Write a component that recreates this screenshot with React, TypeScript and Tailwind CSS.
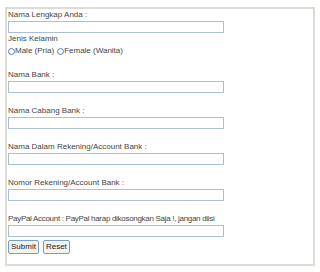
import { useState } from "react";

const fields = [
  "Nama Bank :",
  "Nama Cabang Bank :",
  "Nama Dalam Rekening/Account Bank :",
  "Nomor Rekening/Account Bank :",
];

const inputCls =
  "block w-[216px] h-[12px] border border-[#a9bfd6] bg-white outline-none";

const App = () => {
  const [gender, setGender] = useState("");

  return (
    <div className="w-[320px] h-[272px] bg-white pt-[7px] pl-[5px] font-['Liberation_Sans',Arial,sans-serif] text-[8px] leading-[12px] text-[#444]">
      <form className="w-[310px] h-[259px] border-2 border-[#dcdcd4] px-[1px] pt-0">
        {/* nama lengkap */}
        <div>Nama Lengkap Anda :</div>
        <input className={inputCls} />

        <div>Jenis Kelamin</div>
        <div className="flex items-center h-[12px]">
          <span
            className={`w-[7px] h-[7px] rounded-full border border-[#4a7fc1] ${
              gender === "m" ? "bg-[#4a7fc1]" : "bg-white"
            }`}
            onClick={() => setGender("m")}
          />
          <span>Male (Pria)</span>
          <span
            className={`ml-[3px] w-[7px] h-[7px] rounded-full border border-[#4a7fc1] ${
              gender === "f" ? "bg-[#4a7fc1]" : "bg-white"
            }`}
            onClick={() => setGender("f")}
          />
          <span>Female (Wanita)</span>
        </div>

        {fields.map((f) => (
          <div key={f}>
            <div className="h-[12px]" />
            <div>{f}</div>
            <input className={inputCls} />
          </div>
        ))}

        <div className="h-[12px]" />
        <div className="tracking-[-0.3px]">
          PayPal Account : PayPal harap dikosongkan Saja !, jangan diisi
        </div>
        <input className={inputCls} />

        <div className="flex gap-[4px] mt-[3px]">
          <button
            type="button"
            className="h-[14px] px-[2px] rounded-[2px] border border-[#7b9ebd] bg-[#f2f2ee] text-[8px] leading-[12px] text-[#222]"
          >
            Submit
          </button>
          <button
            type="button"
            className="h-[14px] px-[2px] rounded-[2px] border border-[#7b9ebd] bg-[#f2f2ee] text-[8px] leading-[12px] text-[#222]"
          >
            Reset
          </button>
        </div>
      </form>
    </div>
  );
};

export default App;
